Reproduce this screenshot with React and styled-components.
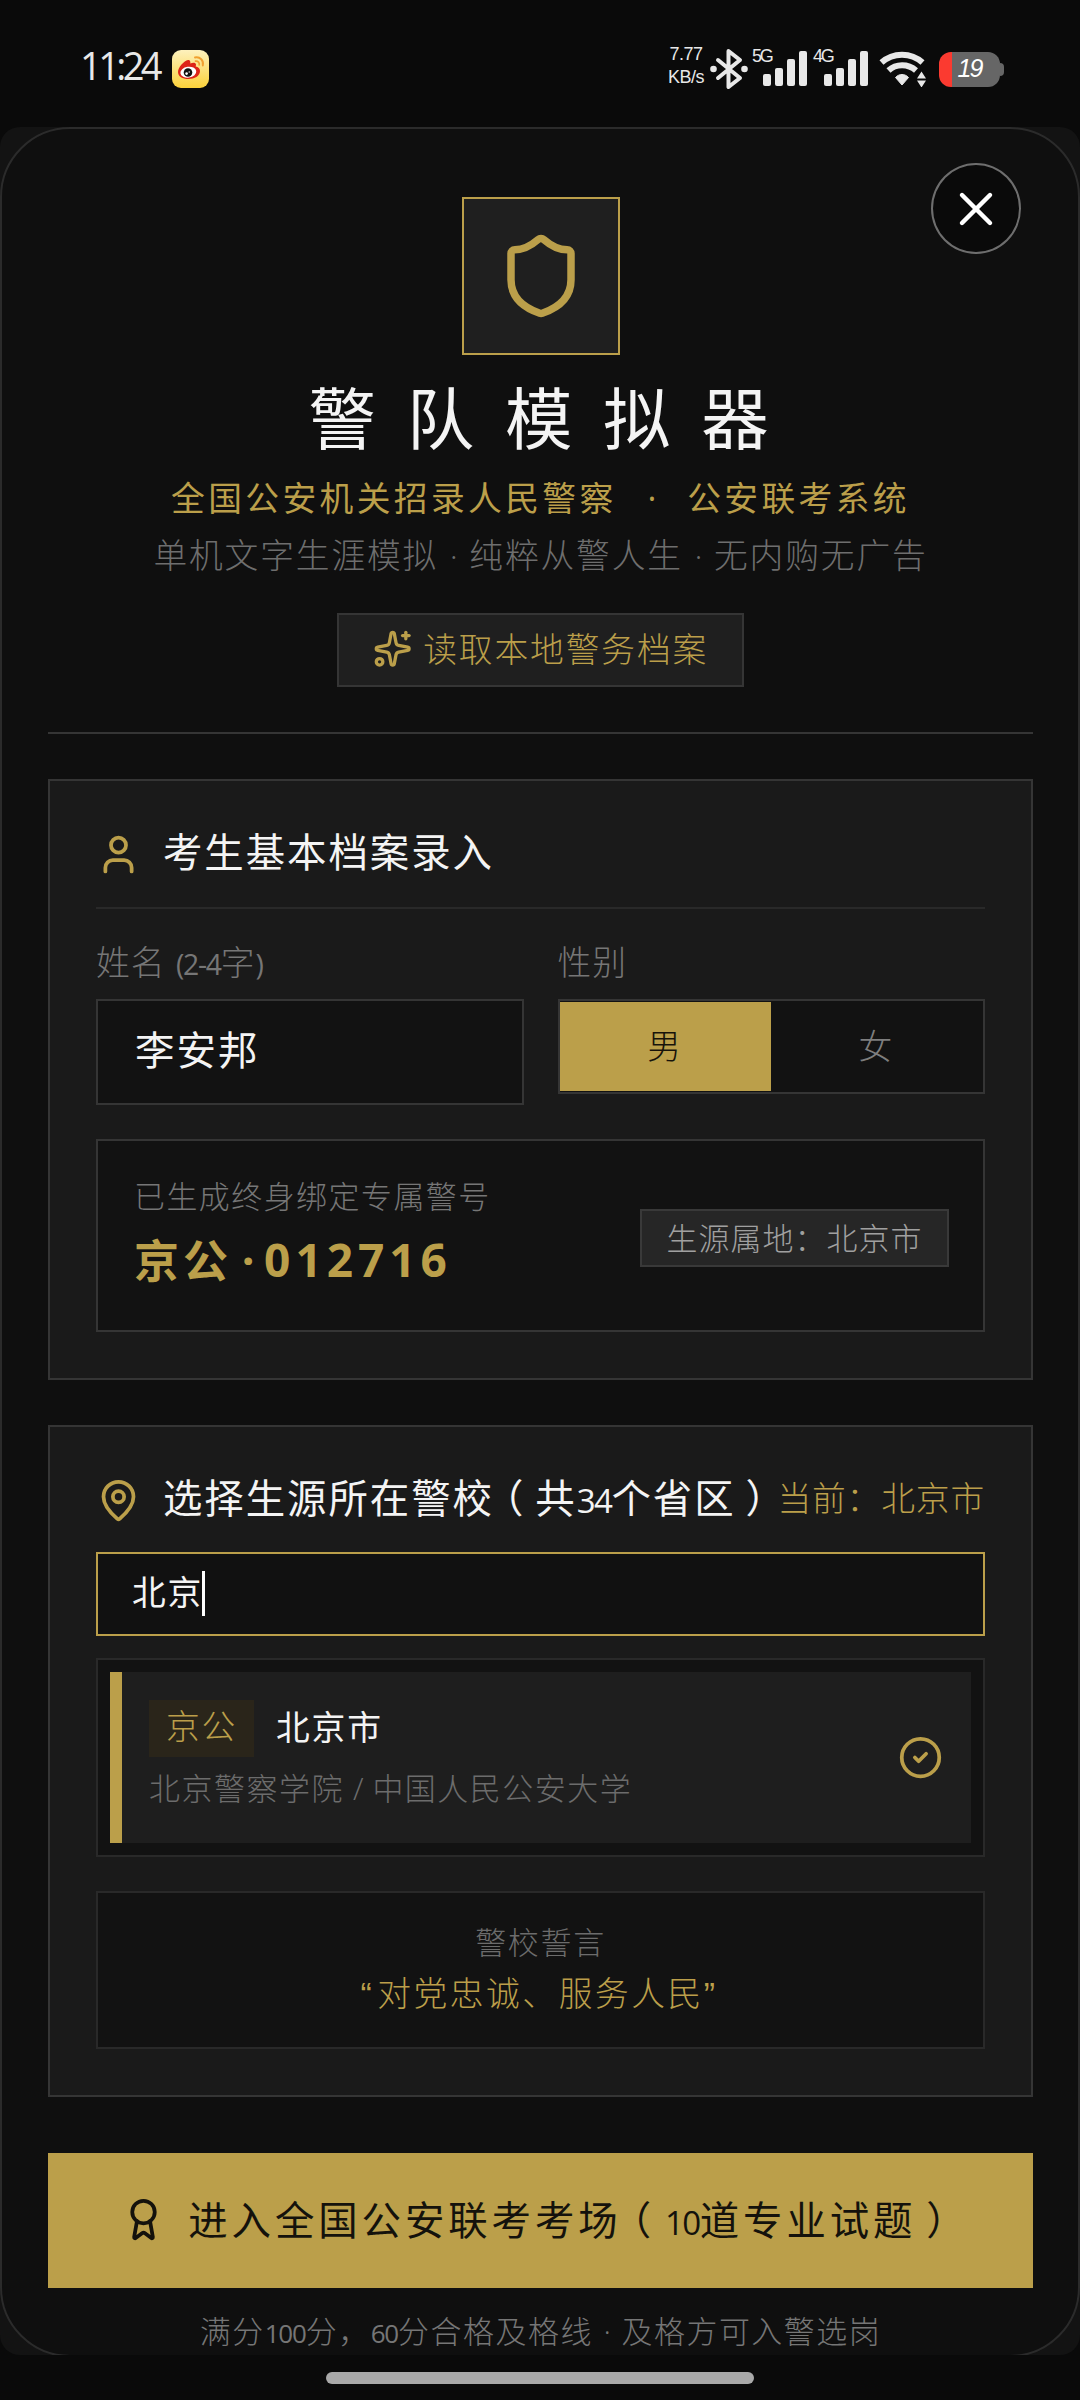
import React from "react";
import styled, { createGlobalStyle, css } from "styled-components";
import { Shield, Sparkles, User, MapPin, CircleCheck, Award, X } from "lucide-react";

const gold = "#bb9f4a";
const line = "#353535";
const softLine = "#292929";
const well = "#121212";
const raised = "#1f1f1f";
const ink = "#f4f4f4";
const muted = "#767676";

const GlobalStyle = createGlobalStyle`
  *, *::before, *::after { box-sizing: border-box; }
  body {
    margin: 0;
    background: #0a0a0a;
    color: ${ink};
    font-family: "Liberation Sans", "Noto Sans CJK SC", sans-serif;
    font-weight: 300;
  }
  button { font: inherit; }
`;

const type = (size, spacing = 0.055) => css`
  font-size: ${size}px;
  letter-spacing: ${spacing}em;
`;

const goldText = css`color: ${gold};`;

const Screen = styled.main`
  width: 1080px;
  height: 2400px;
  display: flex;
  flex-direction: column;
  background: #0a0a0a;
  overflow: hidden;
`;

/* ---------- status bar ---------- */

const StatusBar = styled.header`
  height: 127px;
  flex: none;
  display: flex;
  justify-content: space-between;
  align-items: flex-start;
  padding: 45px 76px 0 80px;
  color: #e8e8e8;
`;

const StatusGroup = styled.div`
  display: flex;
  align-items: center;
  height: 48px;
`;

const Clock = styled.span`
  width: 92px;
  font-family: "Open Sans", "Liberation Sans", sans-serif;
  font-size: 38px;
  font-weight: 400;
  line-height: 40px;
  letter-spacing: -3.6px;
  padding-bottom: 8px;
`;

const NetSpeed = styled.span`
  width: 42px;
  display: flex;
  flex-direction: column;
  font-size: 18px;
  line-height: 23px;
  letter-spacing: -0.5px;
  text-align: center;
  margin-right: 3px;
  padding-bottom: 6px;
`;

const NetKind = styled.span`
  width: 20px;
  align-self: flex-start;
  font-size: 18px;
  line-height: 22px;
  letter-spacing: -2.2px;
`;

const SignalCell = styled.span`
  display: flex;
  width: 61px;
  height: 48px;
`;

const Bars = styled.span`
  display: flex;
  align-items: flex-end;
  gap: 4px;
  height: 41px;
  margin-left: -9px;
`;

const Bar = styled.i`
  width: 8px;
  height: ${(p) => p.$h}px;
  border-radius: 2px;
  background: #e8e8e8;
`;

const Battery = styled.span`
  display: flex;
  align-items: center;
  margin-left: 12px;
`;

const BatteryBody = styled.span`
  width: 61px;
  height: 35px;
  border-radius: 12px;
  background: linear-gradient(90deg, #fb3a30 13px, #666 13px);
  color: #fff;
  font-size: 25px;
  line-height: 33px;
  letter-spacing: -2px;
  font-style: italic;
  text-align: center;
`;

const BatteryTip = styled.i`
  width: 4px;
  height: 13px;
  border-radius: 0 4px 4px 0;
  background: #666;
`;

/* ---------- frame ---------- */

const Viewport = styled.div`
  position: relative;
  height: 2228px;
  flex: none;
  border-radius: 20px;
  background: #131313;
  overflow: hidden;
`;

const Sheet = styled.div`
  height: 2230px;
  display: flex;
  flex-direction: column;
  align-items: center;
  padding: 68px 45px 0 46px;
  border: 2px solid #2b2b2b;
  border-radius: 70px;
  background: #0f0f0f;
`;

const CloseButton = styled.button`
  position: absolute;
  top: 36px;
  right: 59px;
  width: 90px;
  height: 91px;
  display: grid;
  place-items: center;
  padding: 0;
  border: 2px solid #6e6e6e;
  border-radius: 50%;
  background: #0a0a0a;
  color: #fff;
`;

const HomeArea = styled.footer`
  flex: 1;
  display: flex;
  justify-content: center;
  padding-top: 17px;
`;

const HomeIndicator = styled.i`
  width: 428px;
  height: 12px;
  border-radius: 6px;
  background: #a9a9a9;
`;

/* ---------- shared text pieces ---------- */

const Num = styled.span`
  font-family: "Open Sans", "Liberation Sans", sans-serif;
  font-size: 0.84em;
  font-weight: 400;
  line-height: 0;
  letter-spacing: -0.045em;
`;

const Dot = styled.span`
  display: inline-block;
  width: ${(p) => p.$w || "0.92em"};
  font-family: "Open Sans", "Liberation Sans", sans-serif;
  line-height: 1;
  text-align: center;
  letter-spacing: 0;
`;

const Paren = styled.span`
  margin: 0 0.25em;
  font-feature-settings: "halt";
`;

const Quote = styled.span`
  letter-spacing: 0.16em;
`;

/* ---------- hero ---------- */

const Emblem = styled.div`
  width: 158px;
  height: 158px;
  flex: none;
  display: grid;
  place-items: center;
  border: 2px solid ${gold};
  background: ${raised};
  ${goldText}
`;

const Title = styled.h1`
  margin: 21px 0 0;
  padding-left: 0.4em;
  ${type(67.5, 0.455)}
  font-weight: 400;
  line-height: 90px;
  white-space: nowrap;
`;

const Subtitle = styled.p`
  margin: 13px 0 0;
  ${type(33.75, 0.1)}
  font-weight: 400;
  line-height: 40px;
  white-space: nowrap;
  ${goldText}
`;

const Tagline = styled.p`
  margin: 17px 0 0;
  ${type(33.75)}
  line-height: 40px;
  color: #6e6e6e;
  white-space: nowrap;
`;

const LoadButton = styled.button`
  height: 74px;
  width: 407px;
  flex: none;
  margin-top: 37px;
  padding: 0 0 2px;
  display: flex;
  align-items: center;
  justify-content: center;
  gap: 11px;
  border: 2px solid ${line};
  background: ${raised};
  ${type(33.75)}
  ${goldText}

  span { padding-bottom: 4px; }
`;

const Divider = styled.hr`
  width: 100%;
  height: 2px;
  flex: none;
  margin: 45px 0 0;
  border: 0;
  background: ${line};
`;

/* ---------- panels ---------- */

const Panel = styled.section`
  width: 100%;
  flex: none;
  margin-top: 45px;
  padding: 0 46px 46px;
  border: 2px solid ${line};
  background: #1a1a1a;
`;

const PanelHead = styled.div`
  height: ${(p) => (p.$ruled ? 128 : 125)}px;
  padding-top: 21px;
  display: flex;
  align-items: center;
  border-bottom: ${(p) => (p.$ruled ? `2px solid ${softLine}` : "0")};
  white-space: nowrap;

  svg { flex: none; ${goldText} }
`;

const PanelTitle = styled.h2`
  flex: 1;
  margin: 0 0 3px 22px;
  ${type(39.4, 0.05)}
  font-weight: 400;
  line-height: 48px;
`;

const Current = styled.span`
  ${type(33.75, 0.025)}
  line-height: 48px;
  margin: 0 0 3px;
  ${goldText}
`;

const Fields = styled.div`
  display: grid;
  grid-template-columns: 1fr 1fr;
  column-gap: 34px;
  align-items: start;
  padding-top: 36px;
`;

const Label = styled.div`
  height: 36px;
  margin-bottom: 18px;
  ${type(33.75, 0.03)}
  line-height: 36px;
  color: ${muted};
`;

const NameBox = styled.div`
  height: 106px;
  padding: 0 37px 9px;
  display: flex;
  align-items: center;
  border: 2px solid ${line};
  background: ${well};
  ${type(39.4)}
  font-weight: 400;
`;

const Segments = styled.div`
  height: 95px;
  padding: 1px 1px 1px 0;
  display: grid;
  grid-template-columns: 1fr 1fr;
  border: 2px solid ${line};
  background: ${well};
`;

const Segment = styled.button`
  padding: 0 0 4px;
  border: 0;
  ${type(33.75)}
  background: ${(p) => (p.$active ? gold : "transparent")};
  color: ${(p) => (p.$active ? "#17130a" : "#7e7e7e")};
`;

const IdCard = styled.div`
  height: 193px;
  margin-top: 34px;
  padding: 0 34px 0 36px;
  display: flex;
  align-items: center;
  justify-content: space-between;
  border: 2px solid ${line};
  background: ${well};
`;

const IdText = styled.div`
  display: flex;
  flex-direction: column;
  gap: 10px;
  padding-bottom: 5px;
`;

const IdCaption = styled.span`
  ${type(30.94, 0.048)}
  line-height: 42px;
  color: ${muted};
`;

const IdNumber = styled.strong`
  display: flex;
  align-items: center;
  ${type(45, 0.09)}
  font-weight: 700;
  line-height: 60px;
  font-family: "Noto Sans CJK SC", sans-serif;
  ${goldText}
`;

const Digits = styled.span`
  font-family: "Open Sans", "Noto Sans", sans-serif;
  font-weight: 700;
  font-size: 46px;
  letter-spacing: 5px;
`;

const Origin = styled.span`
  width: 309px;
  height: 58px;
  display: flex;
  align-items: center;
  justify-content: center;
  margin-top: 5px;
  padding-bottom: 4px;
  border: 2px solid #393939;
  background: #262626;
  ${type(30.94, 0.035)}
  color: #a0a0a0;
  white-space: nowrap;
`;

const Search = styled.div`
  height: 84px;
  padding: 0 34px 7px;
  display: flex;
  align-items: center;
  border: 2px solid ${gold};
  background: #111;
  ${type(33.75)}
  font-weight: 400;
`;

const Caret = styled.i`
  width: 2.5px;
  height: 45px;
  margin: 5px 0 0 -1px;
  background: #fff;
`;

const List = styled.div`
  height: 199px;
  margin-top: 22px;
  padding: 12px;
  border: 2px solid ${softLine};
  background: ${well};
`;

const Option = styled.div`
  height: 100%;
  padding: 0 28px 0 27px;
  display: flex;
  align-items: center;
  justify-content: space-between;
  border-left: 12px solid ${gold};
  background: #1e1e1e;

  svg { ${goldText} }
`;

const OptionText = styled.div`
  display: flex;
  flex-direction: column;
  gap: 11px;
  padding-bottom: 4px;
`;

const OptionHead = styled.div`
  display: flex;
  align-items: center;
  gap: 22px;
  ${type(33.75)}
`;

const Code = styled.span`
  width: 105px;
  height: 57px;
  display: grid;
  place-items: center;
  padding-bottom: 7px;
  background: #2a251a;
  ${goldText}
`;

const Province = styled.span`
  padding-bottom: 6px;
  font-weight: 400;
`;

const Schools = styled.div`
  ${type(30.94, 0.05)}
  line-height: 44px;
  color: #6c6c6c;
  white-space: nowrap;
`;

const Motto = styled.div`
  height: 158px;
  margin-top: 34px;
  padding-top: 30px;
  border: 2px solid ${softLine};
  background: ${well};
  text-align: center;
`;

const MottoCaption = styled.div`
  ${type(30.94)}
  line-height: 42px;
  color: #6c6c6c;
`;

const MottoText = styled.div`
  margin-top: 4px;
  ${type(33.75, 0.075)}
  line-height: 50px;
  ${goldText}
`;

/* ---------- action ---------- */

const StartButton = styled.button`
  width: 100%;
  height: 135px;
  flex: none;
  margin-top: 56px;
  padding: 0 0 2px;
  display: flex;
  align-items: center;
  justify-content: center;
  gap: 22px;
  border: 0;
  background: ${gold};
  color: #14120c;
  ${type(39.4, 0.1)}
  white-space: nowrap;
`;

const StartText = styled.span`
  padding-bottom: 5px;
  font-weight: 400;
`;

const Footnote = styled.p`
  margin: 25px 0 0;
  ${type(30.94, 0.05)}
  line-height: 40px;
  color: ${muted};
  white-space: nowrap;
`;

/* ---------- drawings ---------- */

const WeiboIcon = () => (
  <svg width="37" height="38" viewBox="0 0 37 38">
    <defs>
      <linearGradient id="wb" x1="0" y1="0" x2="0" y2="1">
        <stop offset="0" stopColor="#fdf1bd" />
        <stop offset="1" stopColor="#fbd13a" />
      </linearGradient>
    </defs>
    <rect width="37" height="38" rx="9" fill="url(#wb)" />
    <path
      d="M6 22c0-5 6-11 10-12 2.500 0 2.500 2 2.300 3.500 2.500-1.200 5.500-1.200 5.700 1 0 1-.3 1.800-.3 2 2.500.6 4.300 2 4.300 4.500 0 5-5.500 8-11.500 8S6 26.500 6 22z"
      fill="#dd2418"
    />
    <ellipse cx="16.300" cy="22.200" rx="8" ry="5.400" fill="#fff" transform="rotate(-8 16 22)" />
    <circle cx="16" cy="22.500" r="4.300" fill="#111" />
    <circle cx="14.600" cy="23.600" r="1.300" fill="#fff" />
    <circle cx="17.200" cy="22" r="0.700" fill="#fff" />
    <path d="M23 7.500c5-1 9 3 7.800 8" fill="none" stroke="#f0a030" strokeWidth="1.900" strokeLinecap="round" />
    <path d="M23.500 11.200c2.500-.4 4.300 1.500 3.700 3.700" fill="none" stroke="#f0a030" strokeWidth="1.700" strokeLinecap="round" />
  </svg>
);

const BluetoothIcon = () => (
  <svg width="38" height="42" viewBox="0 0 38 42" fill="none" stroke="#e8e8e8" strokeWidth="4" strokeLinejoin="round" strokeLinecap="round">
    <path d="M8 12l22 18-11.500 9V3L30 12 8 30" />
    <circle cx="3.500" cy="21" r="3.300" fill="#e8e8e8" stroke="none" />
    <circle cx="34.500" cy="21" r="3.300" fill="#e8e8e8" stroke="none" />
  </svg>
);

const WifiIcon = () => (
  <svg width="48" height="36" viewBox="0 0 48 36" fill="none">
    <path d="M2.500 11.500C14 1 32 1 43.500 11.500" stroke="#e8e8e8" strokeWidth="6" />
    <path d="M9.500 19.500C17 12.500 29 12.500 37 19.500" stroke="#e8e8e8" strokeWidth="6" />
    <path d="M16.500 26.500c3.500-4 9.500-4 13 0L23 34z" fill="#e8e8e8" stroke="#e8e8e8" strokeLinejoin="round" />
    <path d="M42.500 20.500l4.500 7h-9zM42.500 36.500l4.500-7h-9z" fill="#e8e8e8" />
  </svg>
);

const Signal = ({ kind }) => (
  <SignalCell>
    <NetKind>{kind}</NetKind>
    <Bars>
      {[12, 18, 27, 35].map((h) => (
        <Bar key={h} $h={h} />
      ))}
    </Bars>
  </SignalCell>
);

const Gap = styled.i`
  width: ${(p) => p.$w}px;
`;

export default function App() {
  return (
    <Screen>
      <GlobalStyle />
      <StatusBar>
        <StatusGroup>
          <Clock>11:24</Clock>
          <WeiboIcon />
        </StatusGroup>
        <StatusGroup>
          <NetSpeed>
            <span>7.77</span>
            <span>KB/s</span>
          </NetSpeed>
          <BluetoothIcon />
          <Gap $w={4} />
          <Signal kind="5G" />
          <Signal kind="4G" />
          <Gap $w={5} />
          <WifiIcon />
          <Battery>
            <BatteryBody>19</BatteryBody>
            <BatteryTip />
          </Battery>
        </StatusGroup>
      </StatusBar>

      <Viewport>
        <Sheet>
          <Emblem>
            <Shield size={90} />
          </Emblem>
          <Title>警队模拟器</Title>
          <Subtitle>
            全国公安机关招录人民警察<Dot $w="70.6px">·</Dot>公安联考系统
          </Subtitle>
          <Tagline>
            单机文字生涯模拟<Dot>·</Dot>纯粹从警人生<Dot>·</Dot>无内购无广告
          </Tagline>
          <LoadButton>
            <Sparkles size={39.4} />
            <span>读取本地警务档案</span>
          </LoadButton>
          <Divider />

          <Panel>
            <PanelHead $ruled>
              <User size={45} />
              <PanelTitle>考生基本档案录入</PanelTitle>
            </PanelHead>
            <Fields>
              <div>
                <Label>
                  姓名 <Num>(2-4</Num>字<Num>)</Num>
                </Label>
                <NameBox>李安邦</NameBox>
              </div>
              <div>
                <Label>性别</Label>
                <Segments>
                  <Segment $active>男</Segment>
                  <Segment>女</Segment>
                </Segments>
              </div>
            </Fields>
            <IdCard>
              <IdText>
                <IdCaption>已生成终身绑定专属警号</IdCaption>
                <IdNumber>
                  京公<Dot $w="32px">·</Dot>
                  <Digits>012716</Digits>
                </IdNumber>
              </IdText>
              <Origin>生源属地：北京市</Origin>
            </IdCard>
          </Panel>

          <Panel>
            <PanelHead>
              <MapPin size={45} />
              <PanelTitle>
                选择生源所在警校<Paren>（</Paren>共<Num>34</Num>个省区<Paren>）</Paren>
              </PanelTitle>
              <Current>当前：北京市</Current>
            </PanelHead>
            <Search>
              北京
              <Caret />
            </Search>
            <List>
              <Option>
                <OptionText>
                  <OptionHead>
                    <Code>京公</Code>
                    <Province>北京市</Province>
                  </OptionHead>
                  <Schools>
                    北京警察学院<Dot>/</Dot>中国人民公安大学
                  </Schools>
                </OptionText>
                <CircleCheck size={45} />
              </Option>
            </List>
            <Motto>
              <MottoCaption>警校誓言</MottoCaption>
              <MottoText>
                <Quote>“</Quote>对党忠诚、服务人民<Quote>”</Quote>
              </MottoText>
            </Motto>
          </Panel>

          <StartButton>
            <Award size={45} />
            <StartText>
              进入全国公安联考考场<Paren>（</Paren>
              <Num>10</Num>道专业试题<Paren>）</Paren>
            </StartText>
          </StartButton>
          <Footnote>
            满分<Num>100</Num>分，<Num>60</Num>分合格及格线<Dot>·</Dot>及格方可入警选岗
          </Footnote>
        </Sheet>
        <CloseButton aria-label="关闭">
          <X size={56} strokeWidth={1.9} />
        </CloseButton>
      </Viewport>

      <HomeArea>
        <HomeIndicator />
      </HomeArea>
    </Screen>
  );
}
